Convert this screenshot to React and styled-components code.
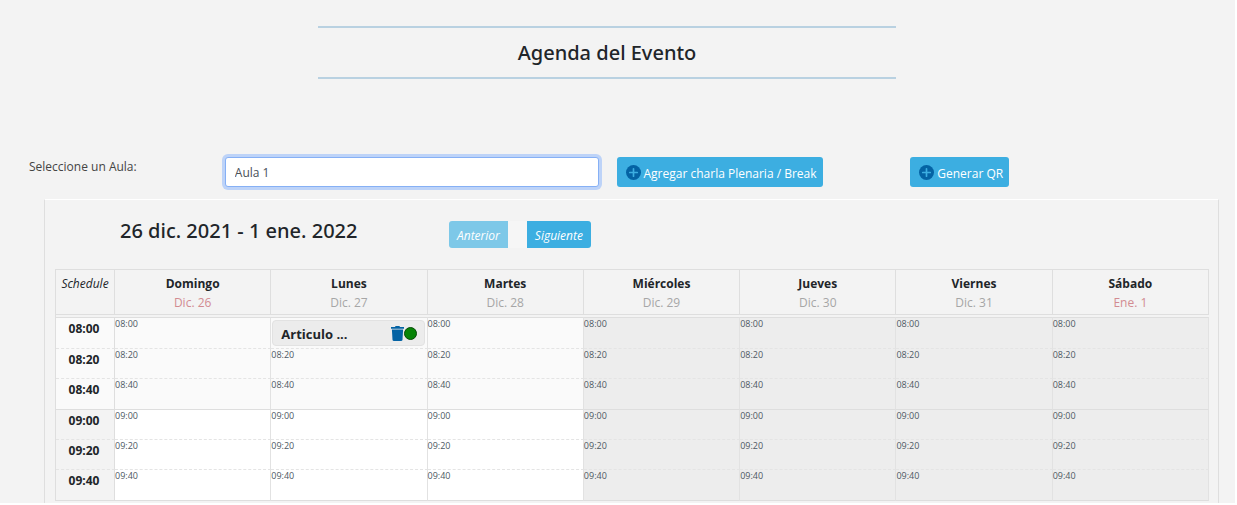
import React from "react";
import styled, { createGlobalStyle } from "styled-components";

const GlobalStyle = createGlobalStyle`
  *, *::before, *::after { box-sizing: border-box; }
  body {
    margin: 0;
    background: #fff;
    color: #212529;
    font-family: "Open Sans", "Noto Sans", sans-serif;
    font-size: 12px;
    line-height: 20px;
  }
  h1, h2 { font-family: "Noto Sans", "Open Sans", sans-serif; }
  button, select { font: inherit; }
`;

const Page = styled.main`
  margin-right: 2px;
  padding-top: 26px;
  background: #f3f3f3;
`;

const TitleBar = styled.header`
  padding: 0 50px 0 29px;
`;

const Title = styled.h1`
  width: 50%;
  margin: 0 auto;
  padding: 13px 0 12px;
  border: solid #b9d1e1;
  border-width: 2px 0;
  font-size: 20px;
  font-weight: 500;
  line-height: 24px;
  text-align: center;
`;

const Toolbar = styled.form`
  display: grid;
  grid-template-columns: 2fr 4fr 3fr 3fr;
  align-items: start;
  margin-top: 78px;
  padding: 0 31px 0 29px;
`;

const Label = styled.label`
  color: #444;
`;

const RoomSelect = styled.select`
  appearance: none;
  height: 30px;
  margin-right: 18px;
  padding: 2px 9px 0;
  border: 1px solid #86b0f5;
  border-radius: 3px;
  outline: none;
  background: #fff;
  box-shadow: 0 0 0 3px #bdd3f8;
  color: #495057;
`;

const Button = styled.button`
  display: inline-flex;
  align-items: center;
  justify-self: start;
  gap: 3px;
  height: 30px;
  padding: 0 6px 0 9px;
  border: 0;
  border-radius: 3px;
  background: #3caee1;
  color: #fff;
  line-height: 16px;
  white-space: nowrap;
`;

const ButtonText = styled.span`
  padding-top: 3px;
`;

const NavButton = styled(Button)`
  height: 27px;
  padding: 2px 8px 0;
  font-style: italic;
  border-radius: ${(p) => (p.$side === "left" ? "3px 0 0 3px" : "0 3px 3px 0")};
  &:disabled { background: #7dc8e8; }
`;

const Calendar = styled.section`
  margin: 12px 16px 0 44px;
  padding: 21px 9px 2px 10px;
  border: solid #dedede;
  border-width: 1px 1px 0;
  border-top-color: #fff;
`;

const CalendarHead = styled.div`
  display: flex;
  align-items: flex-start;
  padding-left: 65px;
`;

const Range = styled.h2`
  flex: 0 0 329px;
  margin: 0;
  font-size: 20px;
  font-weight: 500;
  line-height: 20px;
`;

const Nav = styled.div`
  display: flex;
  gap: 19px;
  background: #f6f6f6;
`;

const Schedule = styled.table`
  width: 100%;
  margin-top: 21px;
  border-collapse: separate;
  border-spacing: 0;
  border-left: 1px solid #dedede;
  table-layout: fixed;
  tbody::before {
    content: "";
    display: block;
    height: 2px;
  }
`;

const HeadCell = styled.th`
  width: ${(p) => (p.$corner ? "59px" : "auto")};
  height: 46px;
  padding: 5px 0 0;
  border: solid #dedede;
  border-width: 1px 1px 1px 0;
  font-weight: ${(p) => (p.$corner ? 400 : 700)};
  font-style: ${(p) => (p.$corner ? "italic" : "normal")};
  line-height: 18px;
  vertical-align: top;
`;

const DayDate = styled.div`
  color: ${(p) => (p.$weekend ? "#d28b91" : "#a6a6a6")};
  font-weight: 400;
  line-height: 20px;
`;

const SlotRow = styled.tr`
  height: ${(p) => (p.$last ? "31px" : "30px")};
  background: ${(p) => (p.$first ? "#fafafa" : "#fff")};
  > * {
    border-bottom: 1px ${(p) => (p.$last ? "solid #dedede" : "dashed #e4e4e4")};
  }
  &:first-child {
    height: 32px;
    > * { border-top: 1px solid #dedede; }
  }
`;

const TimeCell = styled.th`
  padding: 1px 2px 0 0;
  border-right: 1px solid #dedede;
  background: ${(p) => (p.$shaded ? "#f3f3f3" : "transparent")};
  font-weight: 700;
  vertical-align: top;
`;

const SlotCell = styled.td`
  padding: 1px 0 0;
  border-right: 1px solid #e2e2e2;
  background: ${(p) => (p.$closed ? "#ededed" : "transparent")};
  color: #4d5963;
  font-size: 9px;
  font-weight: 500;
  line-height: 10px;
  vertical-align: top;
`;

const Talk = styled.div`
  display: flex;
  align-items: center;
  height: 26px;
  margin: 1px 2px 0 1px;
  padding: 0 7px 0 8px;
  border: 1px solid #e2e2e2;
  border-radius: 4px;
  background: #ececec;
  color: #212529;
  font-size: 13px;
  font-weight: 700;
`;

const TalkName = styled.span`
  padding-top: 2px;
  line-height: 18px;
`;

const DeleteButton = styled.button`
  display: flex;
  margin-left: auto;
  padding: 0;
  border: 0;
  background: none;
`;

const Status = styled.span`
  width: 13px;
  height: 13px;
  border: 1px solid #064a06;
  border-radius: 50%;
  background: #078407;
`;

const PlusIcon = () => (
  <svg width="15" height="15" viewBox="0 0 16 16" aria-hidden="true">
    <circle cx="8" cy="8" r="8" fill="#0463a4" />
    <path d="M8 4v8M4 8h8" stroke="#3caee1" strokeWidth="1.8" strokeLinecap="round" />
  </svg>
);

const TrashIcon = () => (
  <svg width="13" height="15" viewBox="0 0 13 15" aria-hidden="true">
    <path
      d="M0 1h4L4.6 0h3.8L9 1h4v1.8H0zM.9 3.6h11.2l-.6 10.2c0 .7-.5 1.2-1.2 1.2H2.7c-.7 0-1.2-.5-1.2-1.2z"
      fill="#0463a4"
    />
  </svg>
);

const days = [
  { name: "Domingo", date: "Dic. 26", weekend: true },
  { name: "Lunes", date: "Dic. 27" },
  { name: "Martes", date: "Dic. 28" },
  { name: "Miércoles", date: "Dic. 29", closed: true },
  { name: "Jueves", date: "Dic. 30", closed: true },
  { name: "Viernes", date: "Dic. 31", closed: true },
  { name: "Sábado", date: "Ene. 1", weekend: true, closed: true },
];

const times = ["08:00", "08:20", "08:40", "09:00", "09:20", "09:40"];

const talks = { "Lunes 08:00": "Articulo ..." };

export default function App() {
  return (
    <>
      <GlobalStyle />
      <Page>
        <TitleBar>
          <Title>Agenda del Evento</Title>
        </TitleBar>
        <Toolbar>
          <Label htmlFor="room">Seleccione un Aula:</Label>
          <RoomSelect id="room" defaultValue="1">
            <option value="1">Aula 1</option>
          </RoomSelect>
          <Button type="button">
            <PlusIcon />
            <ButtonText>Agregar charla Plenaria / Break</ButtonText>
          </Button>
          <Button type="button">
            <PlusIcon />
            <ButtonText>Generar QR</ButtonText>
          </Button>
        </Toolbar>
        <Calendar>
          <CalendarHead>
            <Range>26 dic. 2021 - 1 ene. 2022</Range>
            <Nav>
              <NavButton type="button" $side="left" disabled>Anterior</NavButton>
              <NavButton type="button" $side="right">Siguiente</NavButton>
            </Nav>
          </CalendarHead>
          <Schedule>
            <thead>
              <tr>
                <HeadCell scope="col" $corner>Schedule</HeadCell>
                {days.map((day) => (
                  <HeadCell key={day.name} scope="col">
                    {day.name}
                    <DayDate $weekend={day.weekend}>{day.date}</DayDate>
                  </HeadCell>
                ))}
              </tr>
            </thead>
            <tbody>
              {times.map((time, i) => (
                <SlotRow key={time} $first={i < 3} $last={i % 3 === 2}>
                  <TimeCell scope="row" $shaded={i >= 3}>{time}</TimeCell>
                  {days.map((day) => {
                    const talk = talks[`${day.name} ${time}`];
                    return (
                      <SlotCell key={day.name} $closed={day.closed}>
                        {talk ? (
                          <Talk>
                            <TalkName>{talk}</TalkName>
                            <DeleteButton type="button" aria-label="Eliminar"><TrashIcon /></DeleteButton>
                            <Status />
                          </Talk>
                        ) : time}
                      </SlotCell>
                    );
                  })}
                </SlotRow>
              ))}
            </tbody>
          </Schedule>
        </Calendar>
      </Page>
    </>
  );
}
